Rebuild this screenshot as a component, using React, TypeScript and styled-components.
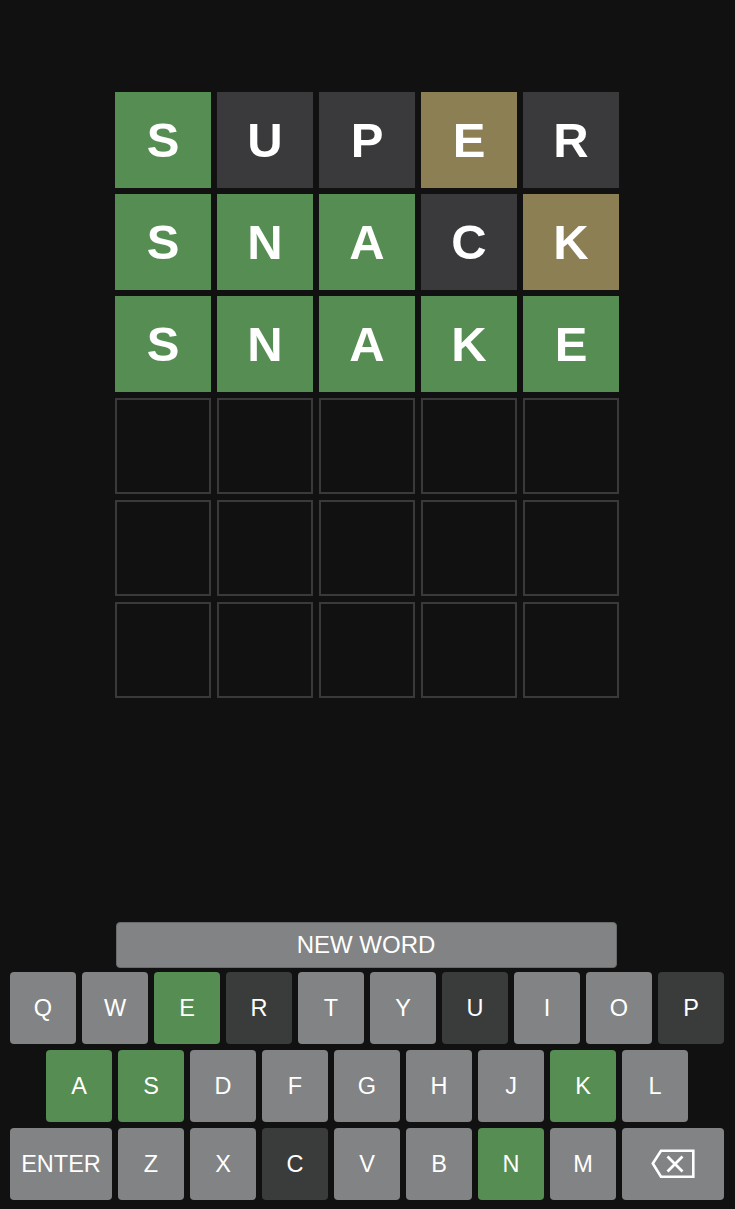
import React from "react";
import styled, { createGlobalStyle } from "styled-components";

const GlobalStyle = createGlobalStyle`
  html, body {
    margin: 0;
    padding: 0;
    background: #111111;
  }
  body {
    font-family: "Liberation Sans", Arial, sans-serif;
    color: #ffffff;
  }
  * { box-sizing: border-box; }
`;

type TileState = "correct" | "present" | "absent" | "empty";

const tileColors: Record<TileState, string> = {
  correct: "#558d53",
  present: "#8b7f53",
  absent: "#3a3a3c",
  empty: "transparent",
};

const keyColors: Record<string, string> = {
  correct: "#558d53",
  absent: "#3a3b3b",
  unused: "#818384",
};

const Page = styled.div`
  min-height: 100vh;
  display: flex;
  flex-direction: column;
  align-items: center;
  justify-content: space-between;
  padding: 92px 1px 9px 0;
`;

const Board = styled.div`
  display: grid;
  grid-template-columns: repeat(5, 96px);
  grid-auto-rows: 96px;
  gap: 6px;
`;

const Tile = styled.div<{ $state: TileState }>`
  display: flex;
  align-items: center;
  justify-content: center;
  background: ${(p) => tileColors[p.$state]};
  border: ${(p) => (p.$state === "empty" ? "2px solid #3a3a3c" : "none")};
  font-family: "Liberation Sans", Arial, sans-serif;
  font-weight: 700;
  font-size: 49px;
  color: #ffffff;
  text-transform: uppercase;
`;

const Keyboard = styled.div`
  display: flex;
  flex-direction: column;
  align-items: center;
  gap: 6px;
`;

const NewWordButton = styled.button`
  width: 501px;
  height: 46px;
  margin: 0 2px -2px 0;
  background: #818384;
  border: 1px solid #6a6b6c;
  border-radius: 4px;
  color: #ffffff;
  font-family: "Liberation Sans", Arial, sans-serif;
  font-size: 24px;
  display: flex;
  align-items: center;
  justify-content: center;
  padding: 0;
`;

const KeyRow = styled.div`
  display: flex;
  gap: 6px;
  justify-content: center;
`;

const Key = styled.button<{ $state: string; $wide?: boolean }>`
  width: ${(p) => (p.$wide ? "102px" : "66px")};
  height: 72px;
  border: none;
  border-radius: 4px;
  background: ${(p) => keyColors[p.$state]};
  color: #ffffff;
  font-family: "Liberation Sans", Arial, sans-serif;
  font-size: 23.5px;
  display: flex;
  align-items: center;
  justify-content: center;
  padding: 0;
`;

const BackspaceIcon = () => (
  <svg width="44" height="30" viewBox="0 0 44 30" fill="none">
    <polygon
      points="1.8,14.5 10,1.8 42.3,1.8 42.3,27.8 10,27.8"
      stroke="#ffffff"
      strokeWidth="2.6"
      strokeLinejoin="miter"
    />
    <path d="M16.5 7.5 L31.5 22.5 M31.5 7.5 L16.5 22.5" stroke="#ffffff" strokeWidth="2.8" />
  </svg>
);

const guesses: { word: string; states: TileState[] }[] = [
  { word: "SUPER", states: ["correct", "absent", "absent", "present", "absent"] },
  { word: "SNACK", states: ["correct", "correct", "correct", "absent", "present"] },
  { word: "SNAKE", states: ["correct", "correct", "correct", "correct", "correct"] },
];

const keyStates: Record<string, string> = {
  E: "correct",
  R: "absent",
  U: "absent",
  P: "absent",
  A: "correct",
  S: "correct",
  K: "correct",
  C: "absent",
  N: "correct",
};

const rows = ["QWERTYUIOP", "ASDFGHJKL", "ZXCVBNM"];

export default function App() {
  const cells: { letter: string; state: TileState }[] = [];
  for (let r = 0; r < 6; r++) {
    const g = guesses[r];
    for (let c = 0; c < 5; c++) {
      cells.push(g ? { letter: g.word[c], state: g.states[c] } : { letter: "", state: "empty" });
    }
  }

  return (
    <>
      <GlobalStyle />
      <Page>
        <Board>
          {cells.map((cell, i) => (
            <Tile key={i} $state={cell.state}>
              {cell.letter}
            </Tile>
          ))}
        </Board>
        <Keyboard>
          <NewWordButton>NEW WORD</NewWordButton>
          {rows.map((row, ri) => (
            <KeyRow key={ri}>
              {ri === 2 && (
                <Key $state="unused" $wide>
                  ENTER
                </Key>
              )}
              {row.split("").map((k) => (
                <Key key={k} $state={keyStates[k] || "unused"}>
                  {k}
                </Key>
              ))}
              {ri === 2 && (
                <Key $state="unused" $wide aria-label="backspace">
                  <BackspaceIcon />
                </Key>
              )}
            </KeyRow>
          ))}
        </Keyboard>
      </Page>
    </>
  );
}
